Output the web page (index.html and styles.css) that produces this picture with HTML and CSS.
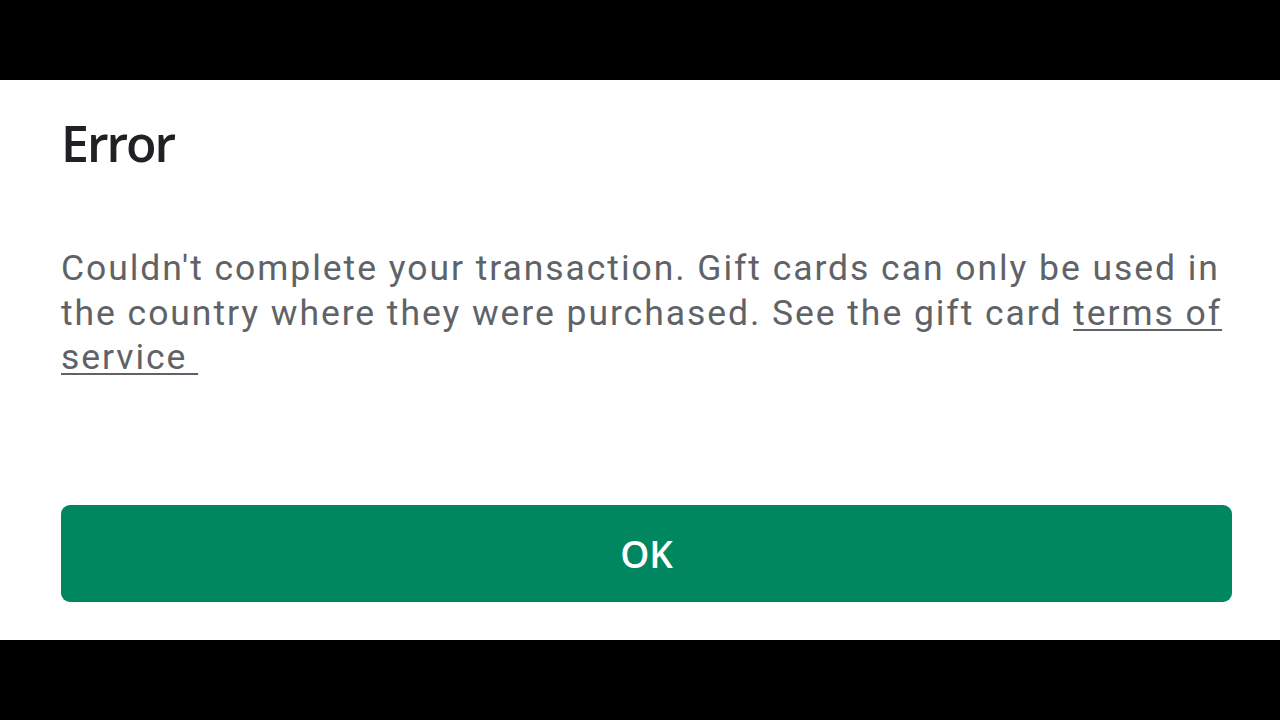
FILE: index.html
```html
<!DOCTYPE html>
<html lang="en">
<head>
    <meta charset="UTF-8">
    <meta name="viewport" content="width=device-width, initial-scale=1.0">
    <title>Error</title>
    <link rel="stylesheet" href="styles.css">
</head>
<body>

    <div class="screen">
        <div class="dialog">
            <h1 class="dialog-title">Error</h1>
            <p class="dialog-message">
                Couldn't complete your transaction. Gift cards can only be used in the country where they were purchased. See the gift card <a href="#" class="terms-link">terms of service&nbsp;</a>
            </p>
            <button class="ok-button">OK</button>
        </div>
    </div>

</body>
</html>
```

FILE: styles.css
```css
html, body {
    margin: 0;
    padding: 0;
    background-color: #000;
}
.screen {
    width: 1280px;
    height: 720px;
    padding: 80px 0;
    box-sizing: border-box;
}
.dialog {
    height: 560px;
    box-sizing: border-box;
    background-color: #fff;
    padding: 38px 48px 38px 61px;
    display: flex;
    flex-direction: column;
}
.dialog-title {
    font-family: "Open Sans", sans-serif;
    font-weight: 600;
    font-size: 50px;
    line-height: 50px;
    letter-spacing: -2px;
    color: #202124;
    margin: 0;
}
.dialog-message {
    font-family: Roboto, sans-serif;
    font-size: 35.5px;
    line-height: 44.5px;
    letter-spacing: 1.95px;
    color: #5f6368;
    margin: 78px 0 0 0;
}
.terms-link {
    color: #5f6368;
    text-decoration: underline;
    text-decoration-thickness: 2px;
    text-underline-offset: 4px;
}
.ok-button {
    margin-top: auto;
    height: 97px;
    width: 100%;
    border: none;
    border-radius: 9px;
    background-color: #01875f;
    color: #fff;
    font-family: "Open Sans", sans-serif;
    font-weight: 600;
    font-size: 37px;
    cursor: pointer;
}
```
